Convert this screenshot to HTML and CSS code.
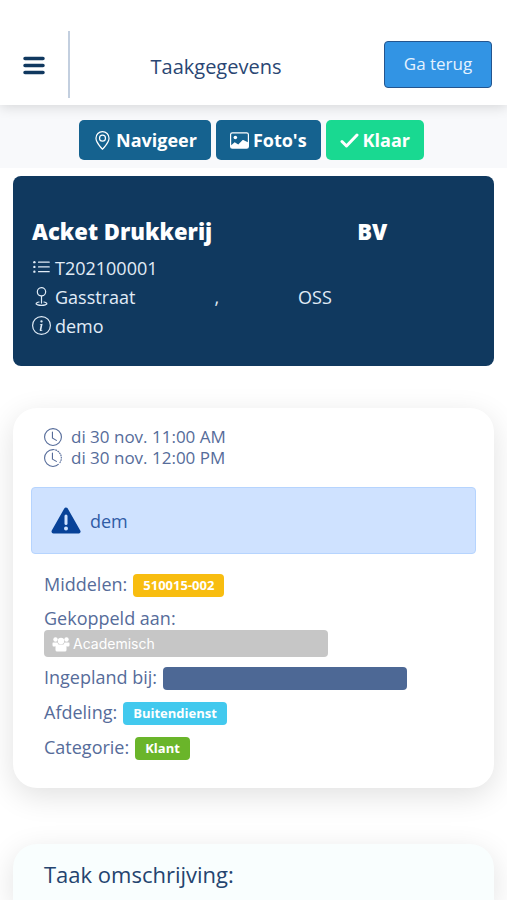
FILE: index.html
```html
<!DOCTYPE html>
<html lang="nl">
<head>
<meta charset="utf-8">
<meta name="viewport" content="width=device-width, initial-scale=1">
<title>Taakgegevens</title>
<link rel="stylesheet" href="styles.css">
</head>
<body>
<header class="topbar">
  <button class="menu" type="button" aria-label="Menu">
    <svg viewBox="0 0 22 20" width="22" height="20"><path d="M2 3.500h18M2 10.500h18M2 17.500h18" stroke="currentColor" stroke-width="3.500" stroke-linecap="round"/></svg>
  </button>
  <h1 class="page-title">Taakgegevens</h1>
  <button class="back" type="button">Ga terug</button>
</header>
<nav class="actions">
  <button class="action" type="button">
    <svg viewBox="0 0 16 16" width="19" height="19" fill="currentColor"><path d="M12.166 8.940c-.524 1.062-1.234 2.120-1.960 3.070A31.493 31.493 0 0 1 8 14.580a31.481 31.481 0 0 1-2.206-2.570c-.726-.950-1.436-2.008-1.960-3.070C3.304 7.867 3 6.862 3 6a5 5 0 0 1 10 0c0 .862-.305 1.867-.834 2.940zM8 16s6-5.686 6-10A6 6 0 0 0 2 6c0 4.314 6 10 6 10z"/><path d="M8 8a2 2 0 1 1 0-4 2 2 0 0 1 0 4zm0 1a3 3 0 1 0 0-6 3 3 0 0 0 0 6z"/></svg>
    Navigeer
  </button>
  <button class="action" type="button">
    <svg viewBox="0 0 16 16" width="19" height="19" fill="currentColor"><path d="M6.002 5.500a1.500 1.500 0 1 1-3 0 1.500 1.500 0 0 1 3 0z"/><path d="M2.002 1a2 2 0 0 0-2 2v10a2 2 0 0 0 2 2h12a2 2 0 0 0 2-2V3a2 2 0 0 0-2-2h-12zm12 1a1 1 0 0 1 1 1v6.500l-3.777-1.947a.5.5 0 0 0-.577.093l-3.710 3.710-2.660-1.772a.5.5 0 0 0-.63.062L1.002 12V3a1 1 0 0 1 1-1h12z"/></svg>
    Foto's
  </button>
  <button class="action action-done" type="button">
    <svg viewBox="0 0 19 19" width="19" height="19"><path d="M2 10.500l4.500 4.500L17 4" fill="none" stroke="currentColor" stroke-width="3" stroke-linecap="round" stroke-linejoin="round"/></svg>
    Klaar
  </button>
</nav>
<main class="content">
  <section class="client">
    <h2 class="client-name"><span>Acket Drukkerij</span><span>BV</span></h2>
    <ul class="client-info">
      <li>
        <svg viewBox="0 0 16 16" width="19" height="19" fill="currentColor"><path d="M5 11.500a.5.5 0 0 1 .5-.5h9a.5.5 0 0 1 0 1h-9a.5.5 0 0 1-.5-.5zm0-4a.5.5 0 0 1 .5-.5h9a.5.5 0 0 1 0 1h-9a.5.5 0 0 1-.5-.5zm0-4a.5.5 0 0 1 .5-.5h9a.5.5 0 0 1 0 1h-9a.5.5 0 0 1-.5-.5z"/><circle cx="2" cy="3.500" r="1"/><circle cx="2" cy="7.500" r="1"/><circle cx="2" cy="11.500" r="1"/></svg>
        T202100001
      </li>
      <li>
        <svg viewBox="0 0 16 16" width="19" height="19" fill="currentColor"><path d="M8 1a3 3 0 1 0 0 6 3 3 0 0 0 0-6zM4 4a4 4 0 1 1 4.500 3.969V13.500a.5.5 0 0 1-1 0V7.970A4 4 0 0 1 4 3.999zm2.493 8.574a.5.5 0 0 1-.411.575c-.712.118-1.280.295-1.655.493a1.319 1.319 0 0 0-.370.265.301.301 0 0 0-.057.090V14l.002.008.016.033a.617.617 0 0 0 .145.150c.165.130.435.270.813.395.751.250 1.820.414 3.024.414s2.273-.163 3.024-.414c.378-.126.648-.265.813-.395a.619.619 0 0 0 .146-.150l.015-.033L12 14v-.004a.301.301 0 0 0-.057-.090 1.318 1.318 0 0 0-.370-.264c-.376-.198-.943-.375-1.655-.493a.5.5 0 1 1 .164-.986c.770.127 1.452.328 1.957.594C12.500 13 13 13.400 13 14c0 .426-.260.752-.544.977-.290.228-.680.413-1.116.558-.878.293-2.059.465-3.340.465-1.281 0-2.462-.172-3.340-.465-.436-.145-.826-.330-1.116-.558C3.260 14.752 3 14.426 3 14c0-.599.500-1 .961-1.243.505-.266 1.187-.467 1.957-.594a.5.5 0 0 1 .575.411z"/></svg>
        <span class="address"><span>Gasstraat</span><span>,</span><span>OSS</span></span>
      </li>
      <li>
        <svg viewBox="0 0 16 16" width="19" height="19" fill="currentColor"><path d="M8 15A7 7 0 1 1 8 1a7 7 0 0 1 0 14zm0 1A8 8 0 1 0 8 0a8 8 0 0 0 0 16z"/><path d="m8.930 6.588-2.290.287-.082.380.450.083c.294.070.352.176.288.469l-.738 3.468c-.194.897.105 1.319.808 1.319.545 0 1.178-.252 1.465-.598l.088-.416c-.2.176-.492.246-.686.246-.275 0-.375-.193-.304-.533L8.930 6.588zM9 4.500a1 1 0 1 1-2 0 1 1 0 0 1 2 0z"/></svg>
        demo
      </li>
    </ul>
  </section>
  <section class="card">
    <ul class="times">
      <li>
        <svg viewBox="0 0 16 16" width="18" height="18" fill="currentColor"><path d="M8 3.500a.5.5 0 0 0-1 0V9a.5.5 0 0 0 .252.434l3.500 2a.5.5 0 0 0 .496-.868L8 8.710V3.500z"/><path d="M8 16A8 8 0 1 0 8 0a8 8 0 0 0 0 16zm7-8A7 7 0 1 1 1 8a7 7 0 0 1 14 0z"/></svg>
        di 30 nov. 11:00 AM
      </li>
      <li>
        <svg viewBox="0 0 16 16" width="18" height="18" fill="none" stroke="currentColor"><path d="M8 .5A7.500 7.500 0 0 0 8 15.500c2 0 3.700-.7 5-2"/><path d="M8 .5A7.500 7.500 0 0 1 13.500 13" stroke-dasharray="1.500 .6"/><path d="M7.500 3.500V9l3.500 2" stroke-linecap="round" stroke-linejoin="round"/></svg>
        di 30 nov. 12:00 PM
      </li>
    </ul>
    <div class="notice">
      <svg viewBox="0 0 30 27" width="30" height="27"><path d="M15 2.500L27.500 24.500h-25z" fill="currentColor" stroke="currentColor" stroke-width="4" stroke-linejoin="round"/><path d="M15 9v7.500" stroke="#cfe2ff" stroke-width="3" stroke-linecap="round"/><circle cx="15" cy="21.500" r="2" fill="#cfe2ff"/></svg>
      <span>dem</span>
    </div>
    <dl class="details">
      <div class="row"><dt>Middelen:</dt><dd class="badge badge-yellow">510015-002</dd></div>
      <div class="row row-stacked"><dt>Gekoppeld aan:</dt><dd class="linked">
        <svg viewBox="0 0 18 16" width="18" height="16" fill="currentColor"><circle cx="3.500" cy="3.500" r="2.200"/><circle cx="14.500" cy="3.500" r="2.200"/><circle cx="9" cy="5" r="3.200"/><path d="M1 6.500h4.500L6.500 9 4 10.500H1.500Q.5 10.500.5 9V7.500Q.5 6.500 1 6.500zM17 6.500h-4.500L11.500 9l2.500 1.500h2.500q1 0 1-1.500V7.500q0-1-.5-1z"/><path d="M5.500 8.500h7q2 .5 2 3V14q0 1.500-1.500 1.500H5q-1.500 0-1.500-1.500v-2.500q0-2.500 2-3z"/></svg>
        Academisch</dd></div>
      <div class="row"><dt>Ingepland bij:</dt><dd class="badge badge-planner"></dd></div>
      <div class="row"><dt>Afdeling:</dt><dd class="badge badge-cyan">Buitendienst</dd></div>
      <div class="row"><dt>Categorie:</dt><dd class="badge badge-green">Klant</dd></div>
    </dl>
  </section>
  <section class="card card-description">
    <h2 class="card-title">Taak omschrijving:</h2>
  </section>
</main>
</body>
</html>
```
FILE: styles.css
```css
* {
  box-sizing: border-box;
}

body {
  margin: 0;
  min-height: 100vh;
  display: flex;
  flex-direction: column;
  background: #fff;
  color: #566c9a;
  font: 18px/24px "Open Sans", sans-serif;
}

h1, h2, ul, dl, dd {
  margin: 0;
  padding: 0;
  font-weight: 400;
}

ul {
  list-style: none;
}

button {
  font: inherit;
  cursor: pointer;
}

svg {
  flex: none;
}

.topbar {
  position: relative;
  display: flex;
  align-items: center;
  padding: 31px 15px 7px 0;
  background: #fff;
  box-shadow: 0 2px 12px rgba(0, 0, 0, 0.14);
}

.menu {
  display: flex;
  align-items: center;
  height: 67px;
  width: 70px;
  padding: 0 0 0 23px;
  border: 0;
  border-right: 2px solid #c3cfdf;
  background: none;
  color: #10385f;
}

.page-title {
  flex: 1;
  padding: 4px 22px 0 0;
  text-align: center;
  font-size: 20px;
  color: #2a4673;
}

.back {
  height: 47px;
  width: 108px;
  margin-bottom: 1px;
  border: 1px solid #24558e;
  border-radius: 4px;
  background: #3294e4;
  color: #e4f2ff;
  font-size: 17px;
}

.actions {
  display: flex;
  justify-content: center;
  gap: 5px;
  padding: 15px 4px 8px 0;
  background: #f8f9fb;
}

.action {
  display: flex;
  align-items: center;
  gap: 4px;
  height: 40px;
  padding: 0 14px;
  border: 0;
  border-radius: 5px;
  background: #15628f;
  color: #fff;
  font-weight: 700;
}

.action-done {
  background: #19d991;
}

.content {
  flex: 1;
  display: flex;
  flex-direction: column;
  padding: 8px 13px 0;
}

.client {
  padding: 41px 19px 26px;
  border-radius: 8px;
  background: #10395f;
  color: #e1ecf7;
}

.client-name {
  display: flex;
  gap: 145px;
  margin-bottom: 8px;
  font-size: 22px;
  line-height: 28px;
  font-weight: 800;
  color: #fff;
}

.client-info li {
  display: flex;
  align-items: center;
  gap: 4px;
  height: 29px;
}

.address {
  display: flex;
  gap: 79px;
}

.card {
  margin-top: 42px;
  padding: 18px;
  border-radius: 24px;
  background: #fff;
  box-shadow: 0 8px 30px rgba(0, 0, 0, 0.12);
}

.times {
  padding-left: 13px;
  font-size: 17px;
  line-height: 21px;
}

.times li {
  display: flex;
  align-items: center;
  gap: 9px;
}

.notice {
  display: flex;
  align-items: center;
  gap: 9px;
  height: 67px;
  margin: 19px 0 17px;
  padding-left: 19px;
  border: 1px solid #b6d4fe;
  border-radius: 4px;
  background: #cfe2ff;
  color: #084298;
}

.notice span {
  color: #2f5ca6;
}

.details {
  padding: 0 13px 1px;
}

.row {
  display: flex;
  align-items: center;
  gap: 6px;
  min-height: 26px;
  margin-bottom: 9px;
}

.row-stacked {
  flex-direction: column;
  align-items: flex-start;
  gap: 0;
  margin-bottom: 7px;
}

.badge {
  height: 23px;
  margin-top: 3px;
  padding: 0 10px;
  border-radius: 4px;
  color: #fff;
  font-size: 13px;
  line-height: 23px;
  font-weight: 700;
}

.badge-yellow {
  background: #f8bd10;
}

.badge-planner {
  width: 244px;
  background: #4d6895;
}

.badge-cyan {
  background: #42c9ee;
}

.badge-green {
  background: #6ab52a;
}

.linked {
  display: flex;
  align-items: center;
  gap: 3px;
  width: 284px;
  height: 27px;
  padding-left: 8px;
  border-radius: 4px;
  background: #c6c6c6;
  color: #fff;
  font-family: Inter, sans-serif;
  font-size: 14px;
}

.card-description {
  flex: 1;
  margin-top: 56px;
  padding: 15px 31px 0;
  border-radius: 24px 24px 0 0;
  background: #f9fefe;
}

.card-title {
  font-size: 22px;
  line-height: 30px;
  color: #24446f;
}
```
